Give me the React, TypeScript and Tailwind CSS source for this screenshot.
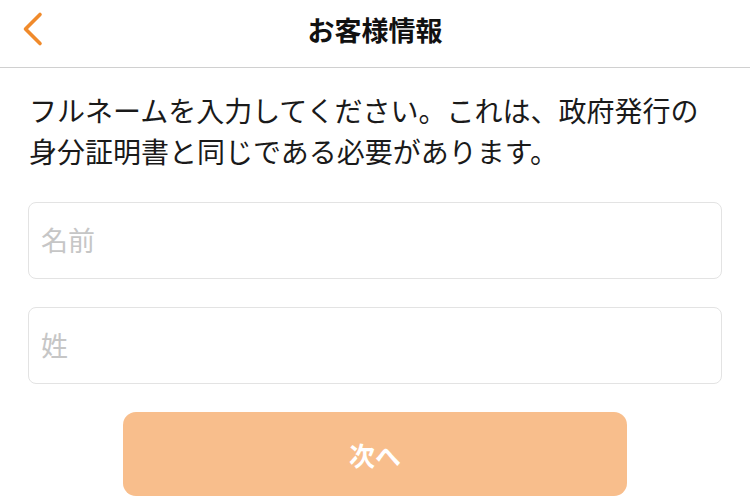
import React from "react";

const font = { fontFamily: '"Noto Sans CJK JP", "Noto Sans", sans-serif' };

export default function App() {
  return (
    <div className="w-[750px] h-[500px] bg-white overflow-hidden" style={font}>
      <div className="relative h-[68px] flex items-center justify-center border-b border-[#d0d0d0]">
        <svg className="absolute left-[20px] top-[11px]" width="26" height="36" viewBox="0 0 26 36">
          <path d="M20 3.5 L5.5 18 L20 32.5" fill="none" stroke="#f08a2b" strokeWidth="3.6" strokeLinecap="round" strokeLinejoin="round" />
        </svg>
        <span className="text-[27px] font-bold text-[#111] leading-none -mt-[8px]">お客様情報</span>
      </div>
      <div className="px-[28px]">
        <p className="mt-[22px] ml-[1px] text-[28px] leading-[41px] text-[#1a1a1a] whitespace-nowrap">
          フルネームを入力してください。これは、政府発行の<br />身分証明書と同じである必要があります。
        </p>
        <div className="mt-[30px] h-[77px] border border-[#e3e3e3] rounded-[8px] flex items-center px-[12px]">
          <span className="text-[27px] text-[#c6c6c6]">名前</span>
        </div>
        <div className="mt-[28px] h-[77px] border border-[#e3e3e3] rounded-[8px] flex items-center px-[12px]">
          <span className="text-[27px] text-[#c6c6c6]">姓</span>
        </div>
        <div className="flex justify-center mt-[28px]">
          <div className="w-[504px] h-[84px] rounded-[13px] bg-[#f8be8c] flex items-center justify-center">
            <span className="text-[26px] font-bold text-white">次へ</span>
          </div>
        </div>
      </div>
    </div>
  );
}
